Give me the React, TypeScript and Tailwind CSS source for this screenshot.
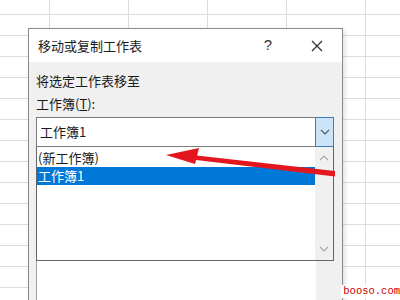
import React from "react";

const cjk = { fontFamily: '"Noto Sans CJK SC", "Noto Sans", sans-serif' };

const rows = Array.from({ length: 15 });
const cols = Array.from({ length: 7 });

export default function App() {
  return (
    <div className="relative w-[400px] h-[300px] overflow-hidden bg-white" style={cjk}>
      {/* spreadsheet behind the dialog */}
      <div className="-mt-[6px] -ml-[29px] flex flex-col">
        {rows.map((_, r) => (
          <div key={r} className="flex h-[21px] shrink-0">
            {cols.map((_, c) => (
              <div key={c} className="w-[79px] h-[21px] shrink-0 border-r border-b border-[#dcdcdc]" />
            ))}
          </div>
        ))}
      </div>

      {/* move or copy dialog */}
      <div className="absolute left-[28px] top-[28px] w-[315px] h-[290px] border border-[#8a8a8a] bg-[#f0f0f0] shadow-[2px_2px_5px_rgba(0,0,0,0.12)] flex flex-col">
        <div className="h-[33px] bg-white flex items-center shrink-0">
          <span className="flex-1 pl-[9px] text-[13px] leading-[18px] text-[#1a1a1a]">移动或复制工作表</span>
          <span className="w-[46px] text-center text-[15px] text-[#333]" style={{ fontFamily: '"Liberation Sans", sans-serif' }}>
            ?
          </span>
          <span className="w-[51px] flex justify-center">
            <svg width="12" height="12" viewBox="0 0 12 12">
              <path d="M1 1 L11 11 M11 1 L1 11" stroke="#333" strokeWidth="1.3" />
            </svg>
          </span>
        </div>

        <div className="flex flex-col pl-[7px]">
          <div className="mt-[10px] text-[13px] leading-[18px] text-[#1a1a1a]">将选定工作表移至</div>
          <div className="mt-[5px] text-[13px] leading-[18px] text-[#1a1a1a]">
            工作簿(<span className="underline">T</span>):
          </div>

          {/* combo box */}
          <div className="mt-[4px] flex h-[30px] w-[298px]">
            <div className="flex-1 bg-white border border-r-0 border-[#7a7a7a] flex items-center pl-[3px] text-[13px] text-[#1a1a1a]">
              工作簿1
            </div>
            <div className="w-[19px] bg-[#cce4f7] border border-[#3f7cb2] flex items-center justify-center">
              <svg width="10" height="6" viewBox="0 0 10 6">
                <path d="M1 1 L5 5 L9 1" fill="none" stroke="#4a5a6a" strokeWidth="1.2" />
              </svg>
            </div>
          </div>

          {/* opened drop-down list */}
          <div className="flex h-[114px] w-[298px] bg-white border border-t-0 border-[#646464]">
            <div className="flex-1 flex flex-col pt-[1px] text-[13px]">
              <div className="h-[19px] leading-[19px] pl-[1px] text-[#1a1a1a]">(新工作簿)</div>
              <div className="h-[18px] leading-[18px] pl-[1px] bg-[#0078d7] text-white">工作簿1</div>
            </div>
            <div className="w-[18px] bg-[#f0f0f0] flex flex-col items-center justify-between pt-[8px] pb-[8px]">
              <svg width="10" height="6" viewBox="0 0 10 6">
                <path d="M1 5 L5 1 L9 5" fill="none" stroke="#a8a8a8" strokeWidth="1.2" />
              </svg>
              <svg width="10" height="6" viewBox="0 0 10 6">
                <path d="M1 1 L5 5 L9 1" fill="none" stroke="#a8a8a8" strokeWidth="1.2" />
              </svg>
            </div>
          </div>

          {/* list box underneath */}
          <div className="flex h-[40px] w-[298px] bg-white border-l border-[#a0a0a0]">
            <div className="flex-1" />
            <div className="w-[18px] bg-[#f0f0f0]" />
          </div>
        </div>
      </div>

      {/* red annotation arrow */}
      <svg className="absolute left-0 top-0 pointer-events-none" width="400" height="300" viewBox="0 0 400 300">
        <polygon points="192,155 192,159.5 335,176.5 335,171" fill="#e3161e" />
        <polygon points="166,155 199,148 195,164" fill="#e3161e" />
      </svg>

      <div
        className="absolute right-0 bottom-[2px] bg-white pl-[2px] text-[10.5px] leading-[13px] text-[#cc0000]"
        style={{ fontFamily: '"Liberation Mono", monospace' }}
      >
        booso.com
      </div>
    </div>
  );
}
